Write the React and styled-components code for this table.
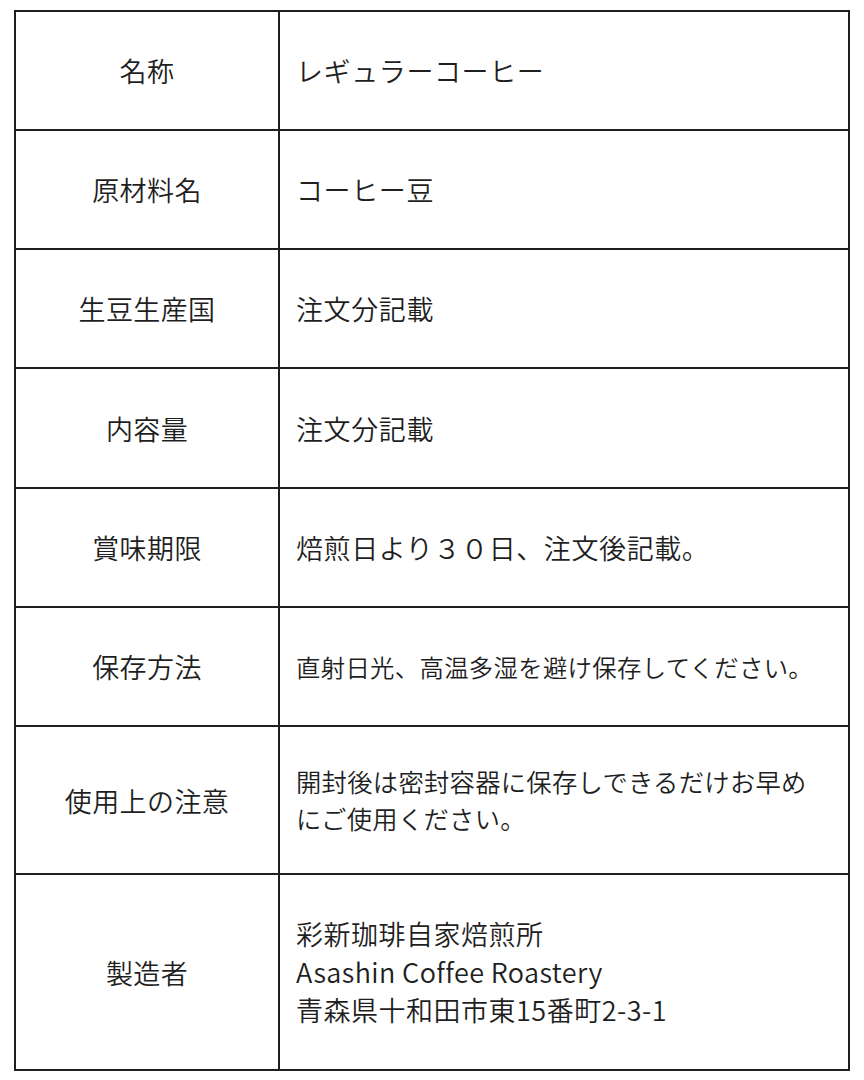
import React from "react";
import styled, { createGlobalStyle } from "styled-components";

const GlobalStyle = createGlobalStyle`
	html, body {
		margin: 0;
		padding: 0;
		background: #fff;
	}

	body {
		font-family: "Noto Sans CJK JP", "Noto Sans", sans-serif;
		font-weight: 350;
		color: #1f1f1f;
	}
`;

const Page = styled.div`
	padding: 10px 14px;
	width: 864px;
	box-sizing: border-box;
`;

const Table = styled.div`
	width: 836px;
	border: 2px solid #1e1e1e;
	box-sizing: border-box;
`;

const Row = styled.div`
	display: grid;
	grid-template-columns: 264px 1fr;
	height: ${(p) => p.height}px;
	box-sizing: border-box;

	& + & {
		border-top: 2px solid #1e1e1e;
	}
`;

const Label = styled.div`
	display: flex;
	align-items: center;
	justify-content: center;
	border-right: 2px solid #1e1e1e;
	font-size: 27px;
	letter-spacing: 0.4px;
	line-height: 37px;
`;

const Value = styled.div`
	display: flex;
	flex-direction: column;
	justify-content: center;
	padding-left: 16px;
	font-size: ${(p) => p.size || 27}px;
	letter-spacing: ${(p) => p.ls ?? 0.6}px;
	line-height: ${(p) => p.lh || 37}px;
	white-space: nowrap;
`;

const Latin = styled.span`
	letter-spacing: 0.4px;
`;

const rows = [
	{ label: "名称", lines: ["レギュラーコーヒー"], height: 117 },
	{ label: "原材料名", lines: ["コーヒー豆"], height: 119 },
	{ label: "生豆生産国", lines: ["注文分記載"], height: 119 },
	{ label: "内容量", lines: ["注文分記載"], height: 120 },
	{ label: "賞味期限", lines: ["焙煎日より３０日、注文後記載。"], height: 119 },
	{
		label: "保存方法",
		lines: ["直射日光、高温多湿を避け保存してください。"],
		height: 119,
		size: 24.4,
		ls: 0.3,
	},
	{
		label: "使用上の注意",
		lines: ["開封後は密封容器に保存しできるだけお早め", "にご使用ください。"],
		height: 148,
		size: 25.3,
		ls: 0.3,
	},
	{
		label: "製造者",
		lines: [
			"彩新珈琲自家焙煎所",
			<Latin key="en">Asashin Coffee Roastery</Latin>,
			"青森県十和田市東15番町2-3-1",
		],
		height: 196,
		size: 27,
		ls: 0.5,
		lh: 38,
	},
];

export default function App() {
	return (
		<Page>
			<GlobalStyle />
			<Table>
				{rows.map((r) => (
					<Row key={r.label} height={r.height}>
						<Label>{r.label}</Label>
						<Value size={r.size} ls={r.ls} lh={r.lh}>
							{r.lines.map((l, i) => (
								<div key={i}>{l}</div>
							))}
						</Value>
					</Row>
				))}
			</Table>
		</Page>
	);
}
